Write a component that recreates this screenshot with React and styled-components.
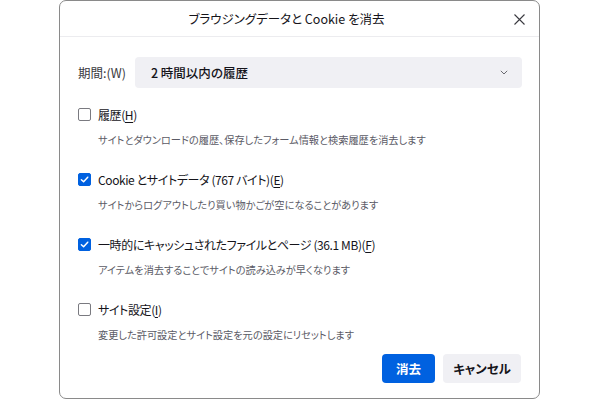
import React from 'react'
import styled, { createGlobalStyle } from 'styled-components'

const GlobalStyle = createGlobalStyle`
  html, body {
    margin: 0;
    padding: 0;
    background: #ffffff;
  }
  body {
    font-family: "Noto Sans CJK JP", "Noto Sans", sans-serif;
    font-feature-settings: "palt";
    color: #15141a;
  }
`

const Page = styled.div`
  width: 600px;
  height: 400px;
  overflow: hidden;
  padding-left: 59px;
  box-sizing: border-box;
`

const Dialog = styled.div`
  width: 481px;
  height: 399px;
  box-sizing: border-box;
  border: 1px solid #8a8a8a;
  border-radius: 7px;
  background: #fff;
  display: flex;
  flex-direction: column;
`

const Header = styled.div`
  height: 35px;
  border-bottom: 1px solid #ececef;
  display: flex;
  align-items: center;
  justify-content: center;
  padding-right: 26px;
  position: relative;
`

const Title = styled.h1`
  margin: 0;
  font-size: 12.5px;
  font-weight: 400;
`

const Close = styled.button`
  position: absolute;
  right: 12px;
  top: 10px;
  width: 16px;
  height: 16px;
  border: 0;
  background: none;
  padding: 0;
  display: flex;
  align-items: center;
  justify-content: center;
  color: #3a3a40;
`

const Body = styled.div`
  padding: 20px 17px 0 18px;
  display: flex;
  flex-direction: column;
`

const RangeRow = styled.div`
  display: flex;
  align-items: center;
  gap: 9px;
  margin-bottom: 16px;
`

const RangeLabel = styled.span`
  font-size: 12.5px;
  color: #3a3a40;
`

const Select = styled.div`
  flex: 1;
  height: 31px;
  background: #f0f0f4;
  border-radius: 4px;
  display: flex;
  align-items: center;
  justify-content: space-between;
  padding: 0 14px 0 16px;
  font-size: 12.5px;
  font-weight: 500;
`

const Item = styled.div`
  display: flex;
  flex-direction: column;
  margin-bottom: ${p => (p.last ? '0' : '21px')};
`

const CheckRow = styled.label`
  display: flex;
  align-items: center;
  gap: 7px;
  height: 20px;
  font-size: 12px;
  letter-spacing: -0.4px;
`

const Box = styled.span`
  width: 13px;
  height: 13px;
  box-sizing: border-box;
  border-radius: 2px;
  border: 1px solid ${p => (p.checked ? '#0061e0' : '#7a7a80')};
  background: ${p => (p.checked ? '#0061e0' : '#fff')};
  display: flex;
  align-items: center;
  justify-content: center;
  flex-shrink: 0;
`

const Key = styled.span`
  text-decoration: underline;
  text-underline-offset: 2px;
`

const Desc = styled.div`
  margin-top: 8px;
  padding-left: 20px;
  font-size: 10.2px;
  line-height: 16px;
  color: #5b5b66;
`

const Footer = styled.div`
  display: flex;
  justify-content: flex-end;
  gap: 8px;
  padding: 11px 18px 0 0;
`

const Button = styled.button`
  height: 29px;
  width: ${p => (p.primary ? '53px' : '78px')};
  padding: 0;
  border: 0;
  border-radius: 4px;
  font-family: inherit;
  font-feature-settings: "palt";
  font-size: 12.5px;
  font-weight: 600;
  background: ${p => (p.primary ? '#0061e0' : '#f0f0f4')};
  color: ${p => (p.primary ? '#fff' : '#15141a')};
`

const Check = ({ checked }) => (
  <Box checked={checked}>
    {checked && (
      <svg width="9" height="9" viewBox="0 0 10 10">
        <path d="M1.5 5.2 L4 7.6 L8.6 2.4" fill="none" stroke="#fff" strokeWidth="1.6" strokeLinecap="round" strokeLinejoin="round" />
      </svg>
    )}
  </Box>
)

const options = [
  { label: <>履歴(<Key>H</Key>)</>, desc: 'サイトとダウンロードの履歴、保存したフォーム情報と検索履歴を消去します', checked: false },
  { label: <>Cookie とサイトデータ (767 バイト)(<Key>E</Key>)</>, desc: 'サイトからログアウトしたり買い物かごが空になることがあります', checked: true },
  { label: <>一時的にキャッシュされたファイルとページ (36.1 MB)(<Key>F</Key>)</>, desc: 'アイテムを消去することでサイトの読み込みが早くなります', checked: true },
  { label: <>サイト設定(<Key>I</Key>)</>, desc: '変更した許可設定とサイト設定を元の設定にリセットします', checked: false },
]

export default function App() {
  return (
    <Page>
      <GlobalStyle />
      <Dialog>
        <Header>
          <Title>ブラウジングデータと Cookie を消去</Title>
          <Close>
            <svg width="11" height="11" viewBox="0 0 11 11">
              <path d="M0.5 0.5 L10.5 10.5 M10.5 0.5 L0.5 10.5" stroke="currentColor" strokeWidth="1.1" />
            </svg>
          </Close>
        </Header>
        <Body>
          <RangeRow>
            <RangeLabel>期間:(W)</RangeLabel>
            <Select>
              <span>2 時間以内の履歴</span>
              <svg width="8" height="5" viewBox="0 0 8 5">
                <path d="M0.8 0.8 L4 4 L7.2 0.8" fill="none" stroke="#6a6a70" strokeWidth="1" />
              </svg>
            </Select>
          </RangeRow>
          {options.map((o, i) => (
            <Item key={i} last={i === options.length - 1}>
              <CheckRow>
                <Check checked={o.checked} />
                <span>{o.label}</span>
              </CheckRow>
              <Desc>{o.desc}</Desc>
            </Item>
          ))}
        </Body>
        <Footer>
          <Button primary>消去</Button>
          <Button>キャンセル</Button>
        </Footer>
      </Dialog>
    </Page>
  )
}
